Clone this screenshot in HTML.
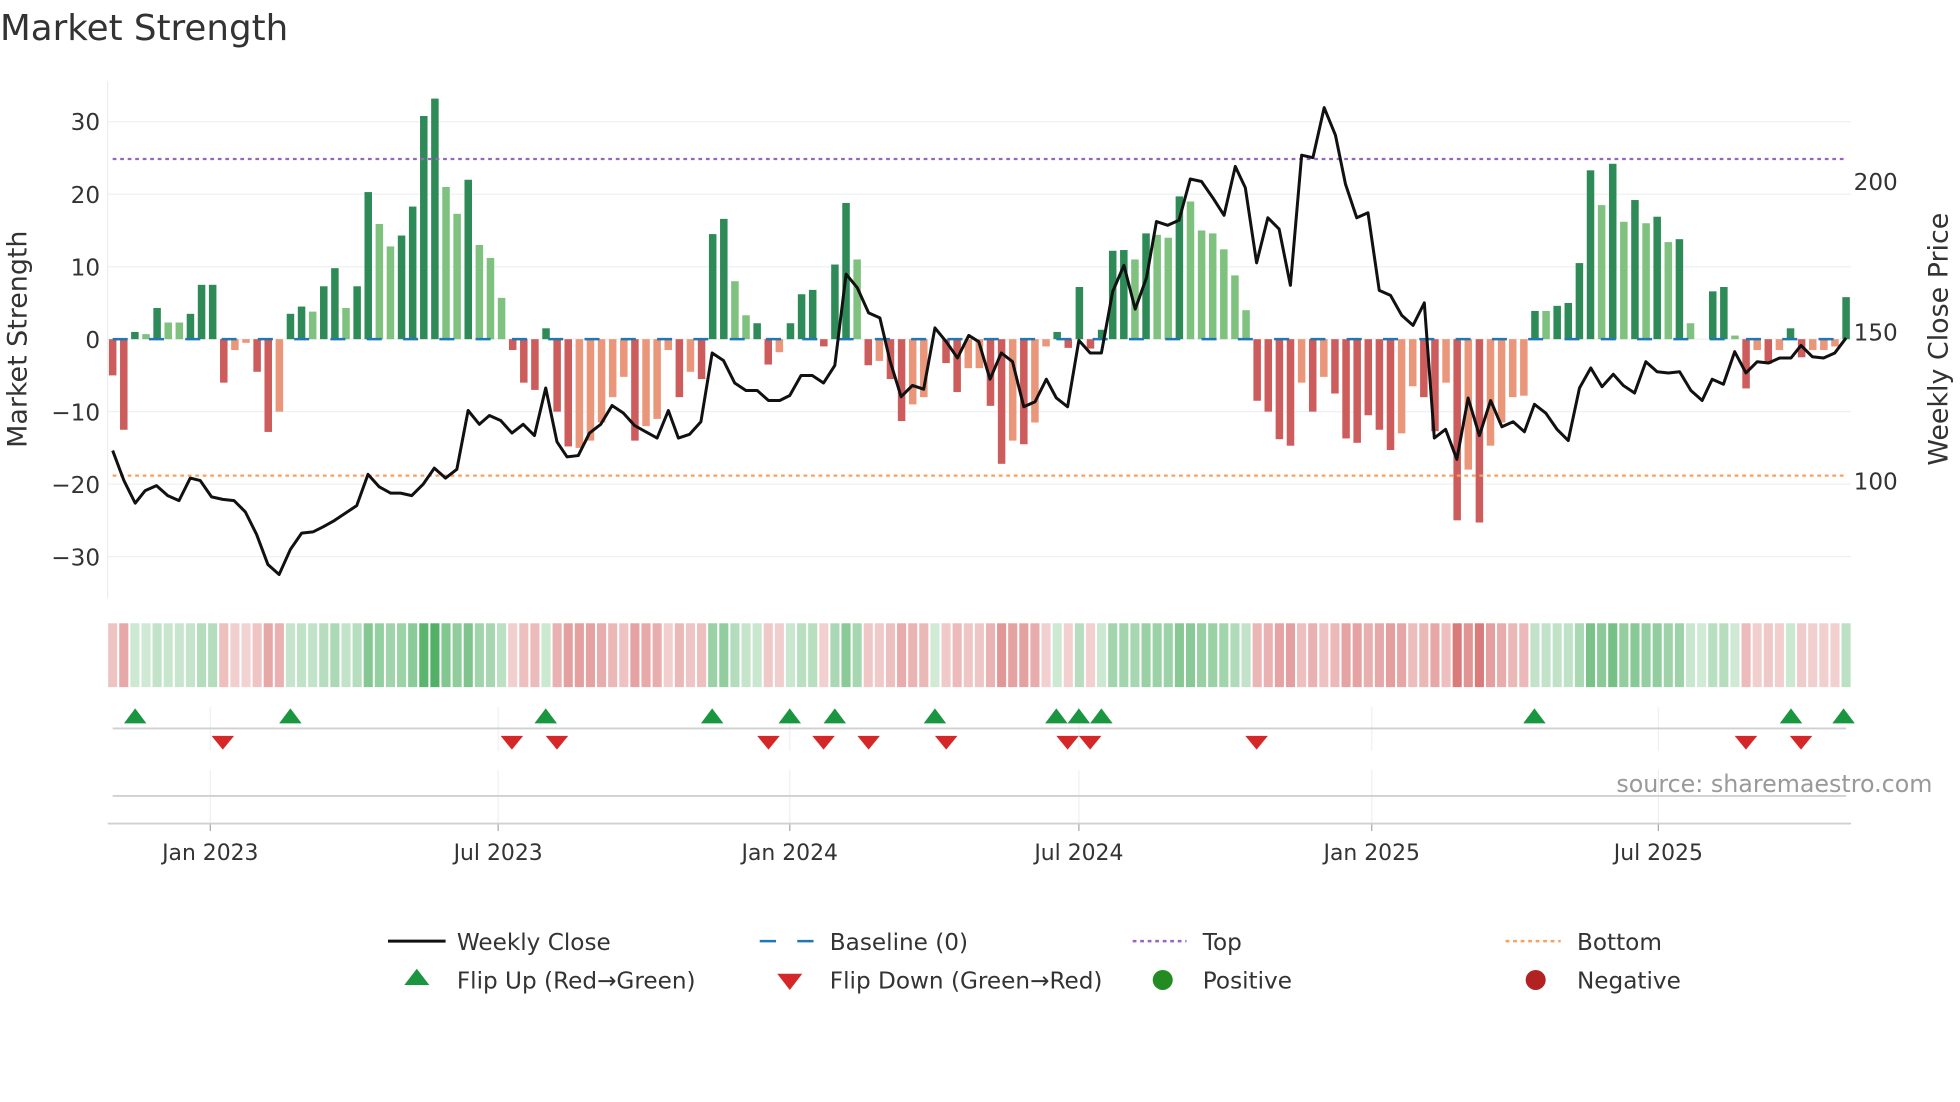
<!DOCTYPE html>
<html><head><meta charset="utf-8"><style>
html,body{margin:0;padding:0;background:#fff;}
svg{display:block;font-family:"DejaVu Sans","Liberation Sans",sans-serif;}
</style></head><body>
<svg id="c" width="1960" height="1102" viewBox="0 0 1566 880.5" xmlns="http://www.w3.org/2000/svg">
<text x="0" y="32" font-size="28.5" fill="#333">Market Strength</text>
<g id="grid"></g>
<line x1="86" y1="65" x2="86" y2="478" stroke="#eee" stroke-width="1"/>
<g id="bars"></g>
<g id="base"></g>
<line x1="90" y1="127" x2="1475" y2="127" stroke="#9467bd" stroke-width="1.8" stroke-dasharray="3,3"/>
<line x1="90" y1="380" x2="1475" y2="380" stroke="#f4a261" stroke-width="1.8" stroke-dasharray="3,3"/>
<polyline id="price" fill="none" stroke="#111" stroke-width="2.4" stroke-linejoin="round"/>
<g id="heat"></g>
<g id="flips"></g>
<g font-size="18.5" fill="#333">
<text x="80" y="104" text-anchor="end">30</text>
<text x="80" y="162" text-anchor="end">20</text>
<text x="80" y="220" text-anchor="end">10</text>
<text x="80" y="278" text-anchor="end">0</text>
<text x="80" y="336" text-anchor="end">−10</text>
<text x="80" y="394" text-anchor="end">−20</text>
<text x="80" y="452" text-anchor="end">−30</text>
<text x="1481" y="152">200</text>
<text x="1481" y="272">150</text>
<text x="1481" y="391">100</text>
</g>
<text transform="translate(21,271) rotate(-90)" font-size="21.5" fill="#333" text-anchor="middle">Market Strength</text>
<text transform="translate(1556,271) rotate(-90)" font-size="21.5" fill="#333" text-anchor="middle">Weekly Close Price</text>
<text x="1544" y="633" font-size="19" fill="#999" text-anchor="end">source: sharemaestro.com</text>
<g font-size="18.5" fill="#333">
<line x1="310" y1="752" x2="356" y2="752" stroke="#111" stroke-width="2.4"/>
<text x="365" y="759">Weekly Close</text>
<line x1="607" y1="752" x2="650" y2="752" stroke="#1f77b4" stroke-width="2" stroke-dasharray="13,17"/>
<text x="663" y="759">Baseline (0)</text>
<line x1="905" y1="752" x2="948" y2="752" stroke="#9467bd" stroke-width="2" stroke-dasharray="3,3"/>
<text x="961" y="759">Top</text>
<line x1="1203" y1="752" x2="1247" y2="752" stroke="#f4a261" stroke-width="2" stroke-dasharray="3,3"/>
<text x="1260" y="759">Bottom</text>
<polygon points="323,787 343,787 333,774" fill="#1a9641"/>
<text x="365" y="790">Flip Up (Red→Green)</text>
<polygon points="621,778 641,778 631,791" fill="#d62728"/>
<text x="663" y="790">Flip Down (Green→Red)</text>
<circle cx="929" cy="783" r="8" fill="#228b22"/>
<text x="961" y="790">Positive</text>
<circle cx="1227" cy="783" r="8" fill="#b22222"/>
<text x="1260" y="790">Negative</text>
</g>
</svg>
<script>
const NS="http://www.w3.org/2000/svg";
function el(p,t,a){const e=document.createElementNS(NS,t);for(const k in a)e.setAttribute(k,a[k]);p.appendChild(e);return e;}
const v=[[-5,'dr'],[-12.5,'dr'],[1,'dg'],[0.7,'lg'],[4.3,'dg'],[2.3,'lg'],[2.3,'lg'],[3.5,'dg'],[7.5,'dg'],[7.5,'dg'],[-6,'dr'],[-1.5,'lr'],[-0.5,'lr'],[-4.5,'dr'],[-12.8,'dr'],[-10,'lr'],[3.5,'dg'],[4.5,'dg'],[3.8,'lg'],[7.3,'dg'],[9.8,'dg'],[4.3,'lg'],[7.3,'dg'],[20.3,'dg'],[15.9,'lg'],[12.8,'lg'],[14.3,'dg'],[18.3,'dg'],[30.8,'dg'],[33.2,'dg'],[21,'lg'],[17.3,'lg'],[22,'dg'],[13,'lg'],[11.2,'lg'],[5.7,'lg'],[-1.5,'dr'],[-6,'dr'],[-7,'dr'],[1.5,'dg'],[-10,'dr'],[-14.8,'dr'],[-15,'lr'],[-14,'lr'],[-11.5,'lr'],[-8,'lr'],[-5.2,'lr'],[-14,'dr'],[-12,'lr'],[-11,'lr'],[-1.5,'lr'],[-8,'dr'],[-4.5,'lr'],[-5.5,'dr'],[14.5,'dg'],[16.6,'dg'],[8,'lg'],[3.3,'lg'],[2.2,'dg'],[-3.5,'dr'],[-1.8,'lr'],[2.2,'dg'],[6.2,'dg'],[6.8,'dg'],[-1,'dr'],[10.3,'dg'],[18.8,'dg'],[11,'lg'],[-3.6,'dr'],[-3,'lr'],[-5.5,'dr'],[-11.3,'dr'],[-9,'lr'],[-8,'lr'],[0,'lr'],[-3.3,'dr'],[-7.3,'dr'],[-4,'lr'],[-4,'lr'],[-9.2,'dr'],[-17.2,'dr'],[-14,'lr'],[-14.5,'dr'],[-11.5,'lr'],[-1,'lr'],[1,'dg'],[-1.2,'dr'],[7.2,'dg'],[-1.3,'dr'],[1.3,'dg'],[12.2,'dg'],[12.3,'dg'],[11,'lg'],[14.6,'dg'],[14.4,'lg'],[14,'lg'],[19.7,'dg'],[19,'lg'],[15,'lg'],[14.6,'lg'],[12.4,'lg'],[8.8,'lg'],[4,'lg'],[-8.5,'dr'],[-10,'dr'],[-13.8,'dr'],[-14.7,'dr'],[-6,'lr'],[-10,'dr'],[-5.2,'lr'],[-7.5,'dr'],[-13.7,'dr'],[-14.3,'dr'],[-10.5,'dr'],[-12.5,'dr'],[-15.3,'dr'],[-13,'lr'],[-6.5,'lr'],[-8,'dr'],[-12.7,'dr'],[-6,'lr'],[-25,'dr'],[-18,'lr'],[-25.3,'dr'],[-14.7,'lr'],[-11.5,'lr'],[-8,'lr'],[-7.8,'lr'],[3.9,'dg'],[3.9,'lg'],[4.6,'dg'],[5,'dg'],[10.5,'dg'],[23.3,'dg'],[18.5,'lg'],[24.2,'dg'],[16.2,'lg'],[19.2,'dg'],[16,'lg'],[16.9,'dg'],[13.4,'lg'],[13.8,'dg'],[2.2,'lg'],[0,'lg'],[6.6,'dg'],[7.2,'dg'],[0.5,'lg'],[-6.8,'dr'],[-1.5,'lr'],[-3.4,'dr'],[-1.5,'lr'],[1.5,'dg'],[-2.5,'dr'],[-1.5,'lr'],[-1.5,'lr'],[-1,'lr'],[5.8,'dg']];
const col={dg:'#2e8b57',lg:'#7fc17f',dr:'#cd5c5c',lr:'#e9967a'};
const n=v.length, x0=90, dx=(1475-90)/(n-1), z=271, s=5.79;
const grid=document.getElementById('grid');
for(let k=-30;k<=30;k+=10) el(grid,'line',{x1:86,x2:1479,y1:z-k*s,y2:z-k*s,stroke:'#eef0f3','stroke-width':1});
[168,398,631,862,1096,1325].forEach(x=>{
 el(grid,'line',{x1:x,x2:x,y1:565,y2:600,stroke:'#eef0f3','stroke-width':1});
 el(grid,'line',{x1:x,x2:x,y1:615,y2:658,stroke:'#eef0f3','stroke-width':1});
 el(grid,'line',{x1:x,x2:x,y1:658,y2:664,stroke:'#aaa','stroke-width':1});
});
const lbl=['Jan 2023','Jul 2023','Jan 2024','Jul 2024','Jan 2025','Jul 2025'];
[168,398,631,862,1096,1325].forEach((x,i)=>{const t=el(grid,'text',{x:x,y:687,'font-size':17.5,fill:'#333','text-anchor':'middle'});t.textContent=lbl[i];});
el(grid,'line',{x1:90,x2:1475,y1:582,y2:582,stroke:'#d0d0d0','stroke-width':1.5});
el(grid,'line',{x1:90,x2:1475,y1:636,y2:636,stroke:'#d0d0d0','stroke-width':1.5});
el(grid,'line',{x1:86,x2:1479,y1:658,y2:658,stroke:'#d0d0d0','stroke-width':1.5});
const bars=document.getElementById('bars'),heat=document.getElementById('heat');
v.forEach((d,i)=>{
 const x=x0+i*dx, h=d[0]*s;
 if(d[0]!==0) el(bars,'rect',{x:x-3,y:h>0?z-h:z,width:6,height:Math.abs(h),fill:col[d[1]]});
 const a=Math.min(1,0.22+0.6*Math.abs(d[0])/33);
 el(heat,'rect',{x:x-dx/2+0.8,y:498,width:dx-1.6,height:51,fill:d[0]>=0?`rgba(46,160,70,${a})`:`rgba(200,60,60,${a})`});
});
el(document.getElementById('base'),'line',{x1:90,x2:1475,y1:z,y2:z,stroke:'#1f77b4','stroke-width':2,'stroke-dasharray':'12,17'});
const p=[[90,360],[99,384],[108,402],[116,392],[125,388],[134,396],[143,400],[152,382],[160,384],[169,397],[178,399],[187,400],[196,409],[205,427],[214,451],[223,459],[232,439],[241,426],[250,425],[258,421],[267,416],[276,410],[285,404],[294,379],[303,389],[312,394],[320,394],[329,396],[338,387],[347,374],[356,382],[365,375],[374,328],[383,339],[391,332],[400,336],[409,346],[418,339],[427,348],[436,310],[445,353],[453,365],[462,364],[471,346],[480,339],[489,324],[498,330],[507,340],[516,345],[525,350],[534,328],[542,350],[551,347],[560,337],[569,282],[578,288],[587,306],[596,312],[605,312],[614,320],[623,320],[631,316],[640,300],[649,300],[658,306],[667,292],[676,219],[685,230],[694,250],[703,254],[711,288],[720,317],[729,308],[738,311],[747,262],[756,273],[765,286],[774,268],[782,273],[791,303],[800,282],[809,289],[818,325],[827,321],[836,303],[844,318],[853,325],[862,272],[871,282],[880,282],[889,233],[898,212],[907,247],[916,222],[924,177],[933,180],[942,176],[951,143],[960,145],[969,158],[978,172],[987,133],[995,150],[1004,210],[1013,174],[1022,183],[1031,228],[1040,124],[1049,126],[1058,86],[1067,108],[1075,147],[1084,174],[1093,170],[1102,232],[1111,236],[1120,252],[1129,260],[1138,242],[1146,350],[1155,343],[1164,367],[1173,318],[1182,348],[1191,320],[1200,341],[1209,337],[1218,345],[1226,323],[1235,330],[1244,343],[1253,352],[1262,310],[1271,294],[1280,309],[1289,299],[1297,308],[1306,314],[1315,289],[1324,297],[1333,298],[1342,297],[1351,312],[1360,320],[1368,303],[1377,307],[1386,281],[1395,298],[1404,289],[1413,290],[1422,286],[1431,286],[1439,276],[1448,285],[1457,286],[1466,282],[1475,270]];
document.getElementById('price').setAttribute('points',p.map(q=>q.join(',')).join(' '));
const f=document.getElementById('flips');
[108,232,436,569,631,667,747,844,862,880,1226,1431,1473].forEach(x=>el(f,'polygon',{points:`${x-9},578 ${x+9},578 ${x},566`,fill:'#1a9641'}));
[178,409,445,614,658,694,756,853,871,1004,1395,1439].forEach(x=>el(f,'polygon',{points:`${x-9},588 ${x+9},588 ${x},599`,fill:'#d62728'}));
</script>
</body></html>
